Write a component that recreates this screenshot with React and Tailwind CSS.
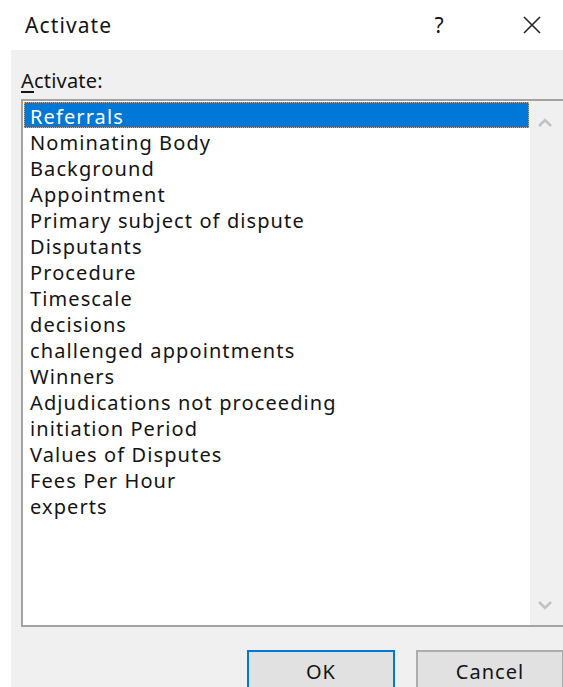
import React from 'react';

const items = [
  'Referrals',
  'Nominating Body',
  'Background',
  'Appointment',
  'Primary subject of dispute',
  'Disputants',
  'Procedure',
  'Timescale',
  'decisions',
  'challenged appointments',
  'Winners',
  'Adjudications not proceeding',
  'initiation Period',
  'Values of Disputes',
  'Fees Per Hour',
  'experts',
];

const Chevron = ({ up }) => (
  <svg width="16" height="10" viewBox="0 0 16 10" className="block">
    <path
      d={up ? 'M2 8 L8 2 L14 8' : 'M2 2 L8 8 L14 2'}
      fill="none"
      stroke="#c2c2c2"
      strokeWidth="2.6"
    />
  </svg>
);

const App = () => {
  const selected = 0;

  return (
    <div
      className="w-[563px] h-[687px] overflow-hidden bg-white flex flex-col text-[#141414]"
      style={{ fontFamily: '"Noto Sans", "Open Sans", sans-serif' }}
    >
      {/* title bar */}
      <div className="h-[50px] shrink-0 flex items-center pl-[25px] bg-white">
        <div className="text-[21px] leading-none tracking-[1.1px]">Activate</div>
        <div className="ml-auto w-[20px] text-center text-[21px] leading-none mr-[73px]">?</div>
        <svg width="20" height="20" viewBox="0 0 20 20" className="mr-[21px]">
          <path d="M2 2 L18 18 M18 2 L2 18" stroke="#222" strokeWidth="1.6" />
        </svg>
      </div>

      {/* dialog body */}
      <div className="ml-[11px] flex-1 bg-[#f0f0f0] pl-[10px] pt-[17px] flex flex-col">
        <div className="text-[20px] leading-[24px] h-[32px] pt-[2px] tracking-[0.2px]">
          <span className="underline underline-offset-[3px]">A</span>ctivate:
        </div>

        <div className="w-[545px] h-[528px] shrink-0 border-2 border-r-0 border-[#a3a3a3] bg-white flex">
          <div className="flex-1 pt-[1px] pl-[1px] pr-[1px]">
            {items.map((label, i) => (
              <div
                key={label}
                className={
                  i === selected
                    ? 'h-[26px] flex items-center pl-[5px] pt-[3px] text-[20px] tracking-[1.1px] bg-[#0078d7] text-white border border-dotted border-[#f0a060]'
                    : 'h-[26px] flex items-center pl-[6px] pt-[3px] text-[20px] tracking-[1.1px]'
                }
              >
                {label}
              </div>
            ))}
          </div>
          <div className="w-[36px] shrink-0 bg-[#f0f0f0] flex flex-col items-center justify-between pt-[17px] pb-[15px] pr-[6px]">
            <Chevron up />
            <Chevron />
          </div>
        </div>

        {/* buttons */}
        <div className="flex pt-[23px] pl-[226px] gap-[21px]">
          <button className="w-[148px] h-[44px] shrink-0 bg-[#e1e1e1] border-2 border-[#0078d7] text-[20px] tracking-[1px] leading-none pb-[0px]">
            OK
          </button>
          <button className="w-[148px] h-[44px] shrink-0 bg-[#e1e1e1] border-2 border-[#adadad] text-[20px] tracking-[1px] leading-none pb-[0px]">
            Cancel
          </button>
        </div>
      </div>
    </div>
  );
};

export default App;
